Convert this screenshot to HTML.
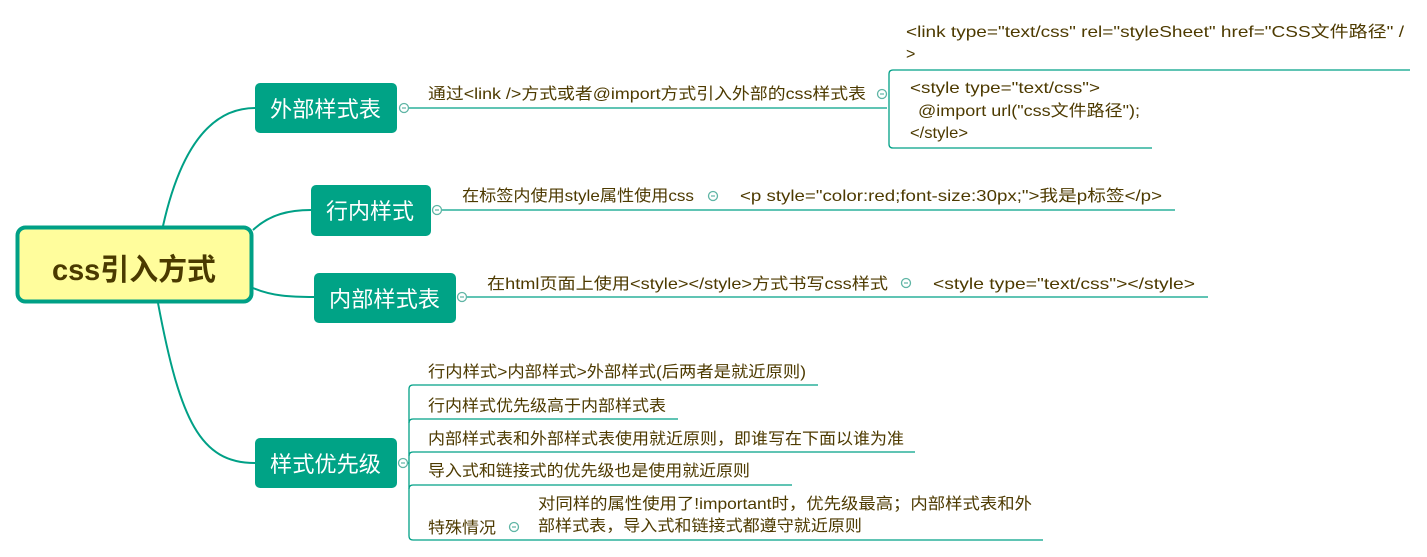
<!DOCTYPE html>
<html><head><meta charset="utf-8"><style>
html,body{margin:0;padding:0;background:#fff;width:1427px;height:557px;overflow:hidden}
text{font-family:"Liberation Sans","Noto Sans CJK SC",sans-serif;fill:#4d3a00;font-size:16px}
.w{fill:#fff;font-size:22px}
</style></head><body>
<svg width="1427" height="557" viewBox="0 0 1427 557" xmlns="http://www.w3.org/2000/svg">
<g fill="none" stroke="#00a086" stroke-width="2">
<path d="M163 226 C180 150 210 108 255 108"/>
<path d="M253 230 C270 214 290 210 311 210"/>
<path d="M253 288 C272 296 290 297 314 297"/>
<path d="M158 303 C180 420 200 463 255 463"/>
</g>
<g fill="none" stroke="#00a086" stroke-width="1.3">
<line x1="408" y1="108" x2="887" y2="108"/>
<path d="M1410 70 H893 Q889 70 889 74 V144 Q889 148 893 148 H1152"/>
<line x1="441" y1="210" x2="1175" y2="210"/>
<line x1="466" y1="297" x2="1208" y2="297"/>
<line x1="407" y1="463" x2="409" y2="463"/>
<path d="M818 385 H413 Q409 385 409 389 V536 Q409 540 413 540 H1043"/>
<path d="M678 419 H413 Q409 419 409 423"/>
<path d="M915 452 H413 Q409 452 409 456"/>
<path d="M792 485 H413 Q409 485 409 489"/>
</g>
<g fill="#fff" stroke="#5fb5a5" stroke-width="1.3">
<circle cx="404" cy="108" r="4.5"/><circle cx="437" cy="210" r="4.5"/>
<circle cx="462" cy="297" r="4.5"/><circle cx="403" cy="463" r="4.5"/>
<circle cx="882" cy="94" r="4.5"/><circle cx="713" cy="196" r="4.5"/>
<circle cx="906" cy="283" r="4.5"/><circle cx="514" cy="527" r="4.5"/>
</g>
<g stroke="#5fb5a5" stroke-width="1.2">
<line x1="402" y1="108" x2="406" y2="108"/><line x1="435" y1="210" x2="439" y2="210"/>
<line x1="460" y1="297" x2="464" y2="297"/><line x1="401" y1="463" x2="405" y2="463"/>
<line x1="880" y1="94" x2="884" y2="94"/><line x1="711" y1="196" x2="715" y2="196"/>
<line x1="904" y1="283" x2="908" y2="283"/><line x1="512" y1="527" x2="516" y2="527"/>
</g>
<rect x="17.5" y="227.5" width="234" height="74" rx="8" fill="#fffd9c" stroke="#00a086" stroke-width="4"/>
<text x="52" y="280" font-weight="bold" textLength="164" lengthAdjust="spacingAndGlyphs" style="font-size:30px;fill:#4a3a00">css引入方式</text>
<g fill="#00a386">
<rect x="255" y="83" width="142" height="50" rx="5"/>
<rect x="311" y="185" width="120" height="51" rx="5"/>
<rect x="314" y="273" width="142" height="50" rx="5"/>
<rect x="255" y="438" width="142" height="50" rx="5"/>
</g>
<text class="w" x="270" y="117" textLength="111" lengthAdjust="spacingAndGlyphs">外部样式表</text>
<text class="w" x="326" y="219" textLength="88" lengthAdjust="spacingAndGlyphs">行内样式</text>
<text class="w" x="329" y="307" textLength="111" lengthAdjust="spacingAndGlyphs">内部样式表</text>
<text class="w" x="270" y="472" textLength="111" lengthAdjust="spacingAndGlyphs">样式优先级</text>
<text x="428" y="99" textLength="438" lengthAdjust="spacingAndGlyphs">通过&lt;link /&gt;方式或者@import方式引入外部的css样式表</text>
<text x="906" y="37" textLength="498" lengthAdjust="spacingAndGlyphs">&lt;link type="text/css" rel="styleSheet"  href="CSS文件路径" /</text>
<text x="906" y="59">&gt;</text>
<text x="910" y="93" textLength="190" lengthAdjust="spacingAndGlyphs">&lt;style type="text/css"&gt;</text>
<text x="918" y="116" textLength="222" lengthAdjust="spacingAndGlyphs">@import url("css文件路径");</text>
<text x="910" y="138" textLength="58" lengthAdjust="spacingAndGlyphs">&lt;/style&gt;</text>
<text x="462" y="201" textLength="232" lengthAdjust="spacingAndGlyphs">在标签内使用style属性使用css</text>
<text x="740" y="201" textLength="422" lengthAdjust="spacingAndGlyphs">&lt;p style="color:red;font-size:30px;"&gt;我是p标签&lt;/p&gt;</text>
<text x="487" y="289" textLength="401" lengthAdjust="spacingAndGlyphs">在html页面上使用&lt;style&gt;&lt;/style&gt;方式书写css样式</text>
<text x="933" y="289" textLength="262" lengthAdjust="spacingAndGlyphs">&lt;style type="text/css"&gt;&lt;/style&gt;</text>
<text x="428" y="377" textLength="378" lengthAdjust="spacingAndGlyphs">行内样式&gt;内部样式&gt;外部样式(后两者是就近原则)</text>
<text x="428" y="411" textLength="238" lengthAdjust="spacingAndGlyphs">行内样式优先级高于内部样式表</text>
<text x="428" y="444" textLength="476" lengthAdjust="spacingAndGlyphs">内部样式表和外部样式表使用就近原则，即谁写在下面以谁为准</text>
<text x="428" y="476" textLength="322" lengthAdjust="spacingAndGlyphs">导入式和链接式的优先级也是使用就近原则</text>
<text x="428" y="533" textLength="68" lengthAdjust="spacingAndGlyphs">特殊情况</text>
<text x="538" y="509" textLength="494" lengthAdjust="spacingAndGlyphs">对同样的属性使用了!important时，优先级最高；内部样式表和外</text>
<text x="538" y="531" textLength="324" lengthAdjust="spacingAndGlyphs">部样式表，导入式和链接式都遵守就近原则</text>
</svg>
</body></html>
